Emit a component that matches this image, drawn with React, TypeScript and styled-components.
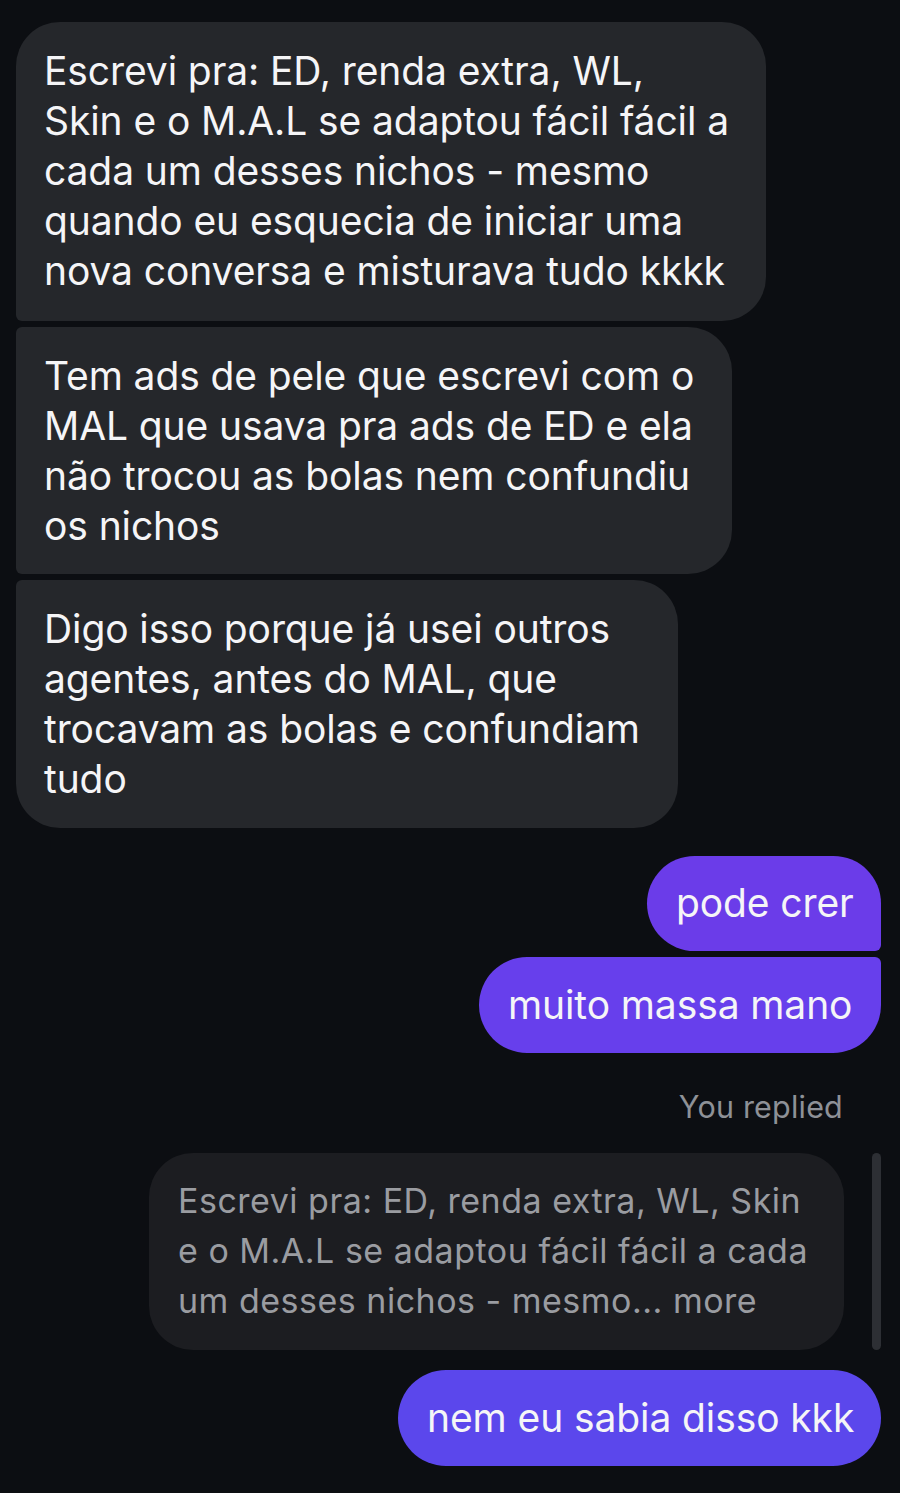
import React from "react";
import styled, { createGlobalStyle } from "styled-components";

const Global = createGlobalStyle`
  html, body { margin: 0; padding: 0; background: #0c0e12; }
  body { font-family: Inter, "Noto Sans", "Liberation Sans", sans-serif; -webkit-font-smoothing: antialiased; }
`;

const Thread = styled.div`
  display: flex;
  flex-direction: column;
  padding: 22px 19px 27px 16px;
  min-height: 1493px;
  box-sizing: border-box;
  background: #0c0e12;
`;

const Group = styled.div<{ $side: "left" | "right"; $mt?: number }>`
  display: flex;
  flex-direction: column;
  align-items: ${(p) => (p.$side === "left" ? "flex-start" : "flex-end")};
  gap: 6px;
  margin-top: ${(p) => p.$mt ?? 0}px;
`;

const Bubble = styled.div<{
  $radius: string;
  $bg: string;
  $pad: string;
  $w: number;
  $color?: string;
  $small?: boolean;
}>`
  width: ${(p) => p.$w}px;
  background: ${(p) => p.$bg};
  color: ${(p) => p.$color ?? "#f5f5f7"};
  border-radius: ${(p) => p.$radius};
  padding: ${(p) => p.$pad};
  font-size: ${(p) => (p.$small ? 34 : 39)}px;
  letter-spacing: ${(p) => (p.$small ? 0.5 : -0.1)}px;
  line-height: 50px;
  white-space: nowrap;
  box-sizing: border-box;
`;

const Line = styled.div``;

const RepliedLabel = styled.div`
  align-self: flex-end;
  margin: 36px 38px 28px 0;
  color: #8e9197;
  font-size: 30.5px;
  line-height: 36px;
  letter-spacing: 0.2px;
`;

const QuoteRow = styled.div`
  display: flex;
  justify-content: flex-end;
  gap: 28px;
`;

const QuoteBar = styled.div`
  width: 9px;
  border-radius: 5px;
  background: #2d2f34;
`;

const GREY = "#25272b";

const Msg = ({ lines, ...rest }: { lines: string[] } & React.ComponentProps<typeof Bubble>) => (
  <Bubble {...rest}>
    {lines.map((l, i) => (
      <Line key={i}>{l}</Line>
    ))}
  </Bubble>
);

export default function App() {
  return (
    <>
      <Global />
      <Thread>
        <Group $side="left">
          <Msg
            $bg={GREY}
            $w={750}
            $radius="44px 44px 44px 6px"
            $pad="24px 0 25px 28px"
            lines={[
              "Escrevi pra: ED, renda extra, WL,",
              "Skin e o M.A.L se adaptou fácil fácil a",
              "cada um desses nichos - mesmo",
              "quando eu esquecia de iniciar uma",
              "nova conversa e misturava tudo kkkk",
            ]}
          />
          <Msg
            $bg={GREY}
            $w={716}
            $radius="6px 44px 44px 6px"
            $pad="24px 0 23px 28px"
            lines={[
              "Tem ads de pele que escrevi com o",
              "MAL que usava pra ads de ED e ela",
              "não trocou as bolas nem confundiu",
              "os nichos",
            ]}
          />
          <Msg
            $bg={GREY}
            $w={662}
            $radius="6px 44px 44px 44px"
            $pad="24px 0 24px 28px"
            lines={[
              "Digo isso porque já usei outros",
              "agentes, antes do MAL, que",
              "trocavam as bolas e confundiam",
              "tudo",
            ]}
          />
        </Group>

        <Group $side="right" $mt={28}>
          <Msg $bg="#6b3ce9" $w={234} $radius="48px 48px 6px 48px" $pad="22px 0 23px 29px" lines={["pode crer"]} />
          <Msg $bg="#673fec" $w={402} $radius="48px 6px 48px 48px" $pad="23px 0 23px 29px" lines={["muito massa mano"]} />
        </Group>

        <RepliedLabel>You replied</RepliedLabel>

        <QuoteRow>
          <Msg
            $bg="#1c1d21"
            $color="#9a9ca1"
            $small
            $w={695}
            $radius="44px"
            $pad="23px 0 24px 29px"
            lines={[
              "Escrevi pra: ED, renda extra, WL, Skin",
              "e o M.A.L se adaptou fácil fácil a cada",
              "um desses nichos - mesmo... more",
            ]}
          />
          <QuoteBar />
        </QuoteRow>

        <Group $side="right" $mt={20}>
          <Msg $bg="#5b47ec" $w={483} $radius="48px" $pad="23px 0 23px 29px" lines={["nem eu sabia disso kkk"]} />
        </Group>
      </Thread>
    </>
  );
}
